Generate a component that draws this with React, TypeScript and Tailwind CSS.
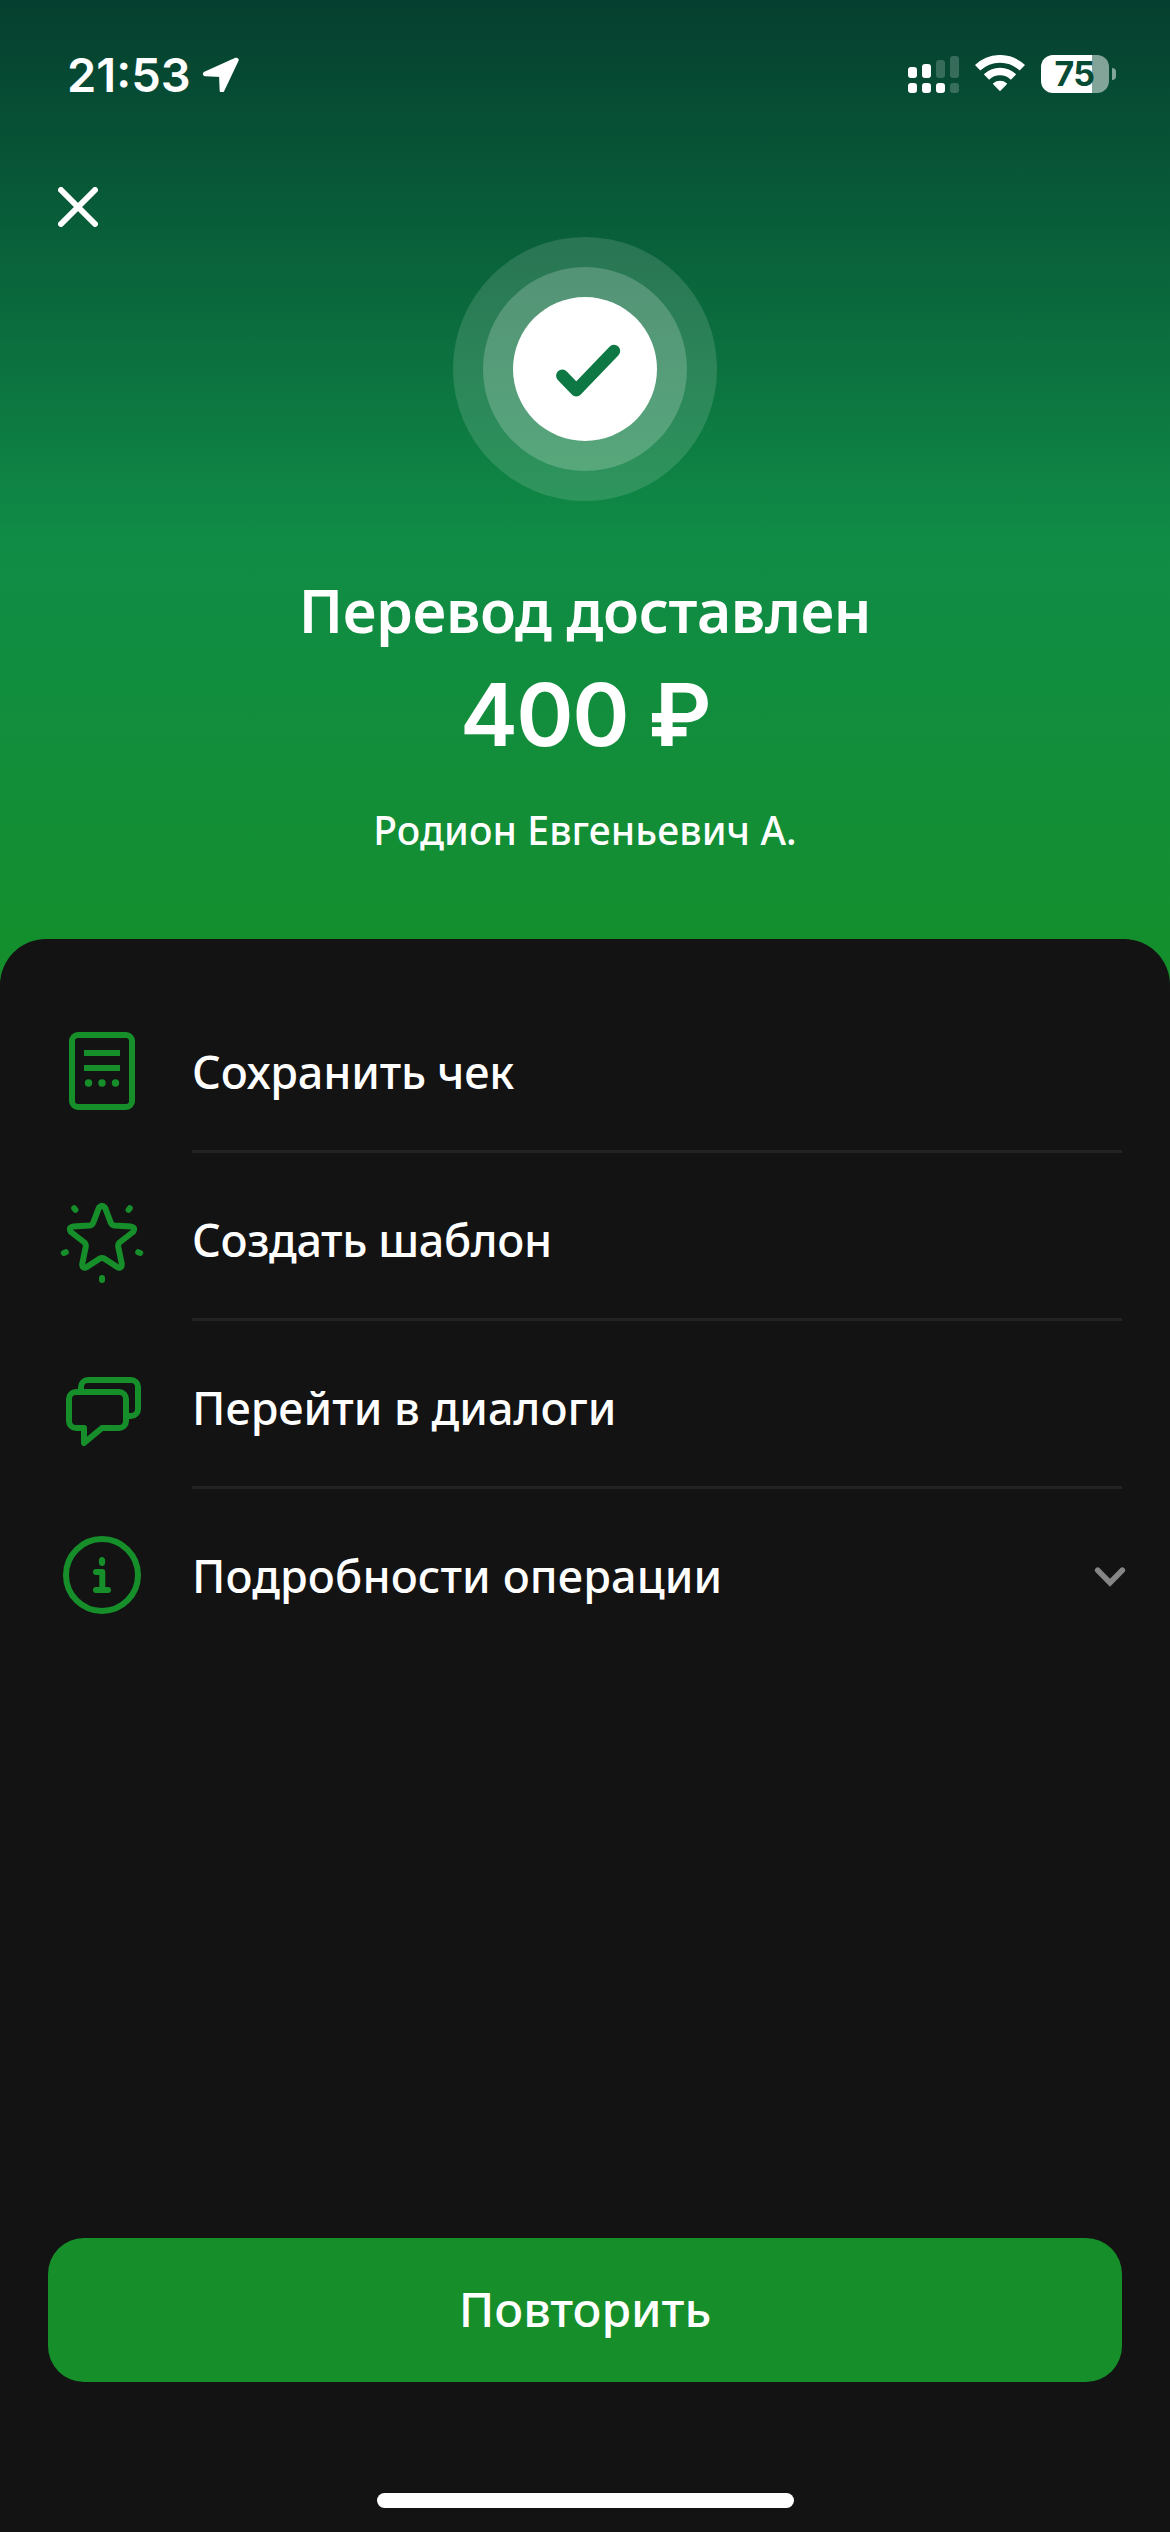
import type { ReactNode } from "react";

function StatusBar() {
  return <div className="flex h-[148px] items-center justify-between pl-[67px] pr-[54px]">
    <div className="flex items-center font-['Inter',sans-serif] text-[47px] leading-none font-semibold">
      <span className="w-[135px]">21:53</span>
      <svg className="h-[36px] w-[38px]" viewBox="486 78 114 108" fill="#fff" stroke="#fff" strokeWidth="14" strokeLinejoin="round">
        <path d="M589 90 496 132 544 134 546 181Z" />
      </svg>
    </div>
    <div className="flex items-center gap-4">
      <svg className="h-[38px] w-[51px]" viewBox="0 0 51 38" fill="#fff">
        <rect x="0" y="12" width="9" height="11" rx="3" />
        <rect x="14" y="9" width="9" height="14" rx="3" />
        <rect x="28" y="5" width="9" height="18" rx="3" opacity=".2" />
        <rect x="42" y="1" width="9" height="22" rx="3" opacity=".2" />
        <rect x="0" y="28" width="9" height="10" rx="3" />
        <rect x="14" y="28" width="9" height="10" rx="3" />
        <rect x="28" y="28" width="9" height="10" rx="3" />
        <rect x="42" y="28" width="9" height="10" rx="3" opacity=".2" />
      </svg>
      <svg className="h-[38px] w-[50px]" viewBox="282 75 150 114" fill="none" stroke="#fff">
        <path d="M290 113.5A96.5 96.5 0 0 1 424 113.5" strokeWidth="23" />
        <path d="M316.4 141A58.5 58.5 0 0 1 397.6 141" strokeWidth="23" />
        <path d="M357 181 338 161A30 30 0 0 1 376 161Z" fill="#fff" strokeWidth="4" strokeLinejoin="round" />
      </svg>
      <div className="flex items-center gap-[3px]">
        <div className="flex h-[38px] w-[68px] items-center justify-center rounded-[12px] bg-linear-to-r from-white from-75% to-white/50 to-75% font-['Inter',sans-serif] text-[34px] leading-none font-bold tracking-[-0.5px] text-[#064b35]">
          <span className="-ml-[1px]">75</span>
        </div>
        <div className="h-[12px] w-[4px] rounded-r-full bg-white/50" />
      </div>
    </div>
  </div>;
}

function Icon({ children }: { children: ReactNode }) {
  return <svg className="mt-[42px] size-[84px] shrink-0 overflow-visible" viewBox="0 0 84 84" fill="none" stroke="#168f2b" strokeWidth="6">{children}</svg>;
}

const actions = [
  {
    title: "Сохранить чек",
    tracking: "tracking-[-0.2px]",
    icon: <Icon>
      <rect x="12" y="6" width="60" height="72" rx="6" />
      <path d="M24 24h36M24 39h36" />
      <g fill="#168f2b" stroke="none"><circle cx="28.5" cy="54" r="3.7" /><circle cx="42" cy="54" r="3.7" /><circle cx="55.5" cy="54" r="3.7" /></g>
    </Icon>,
  },
  {
    title: "Создать шаблон",
    tracking: "tracking-[-0.4px]",
    icon: <Icon>
      <path d="M39 10.5Q42 7.5 45 10.5L50.5 25Q51.5 28.3 54.5 28.6L71 29.6Q76 30.5 73 35L59.5 45.5Q57.8 47.2 58.3 50L61.8 67Q61.8 72.5 56.8 69.8L44.5 61.7Q42 60.3 39.5 61.7L27.2 69.8Q22.2 72.5 22.2 67L25.7 50Q26.2 47.2 24.5 45.5L11 35Q8 30.5 13 29.6L29.5 28.6Q32.5 28.3 33.5 25Z" strokeLinejoin="round" />
      <path d="M14.2 11.2l1.2 1.6M69.8 11.2l-1.2 1.6M3.8 56l2-.8M80.2 56l-2-.8M42 81v2" strokeLinecap="round" />
    </Icon>,
  },
  {
    title: "Перейти в диалоги",
    tracking: "tracking-normal",
    icon: <Icon>
      <path d="M21 27V22a7 7 0 0 1 7-7H71a7 7 0 0 1 7 7V44a7 7 0 0 1-7 7H66" />
      <path d="M16 27H59a7 7 0 0 1 7 7V56a7 7 0 0 1-7 7H42L24 78V63H16a7 7 0 0 1-7-7V34a7 7 0 0 1 7-7Z" strokeLinejoin="round" />
    </Icon>,
  },
  {
    title: "Подробности операции",
    tracking: "tracking-[0.1px]",
    expandable: true,
    icon: <Icon>
      <circle cx="42" cy="42" r="36" />
      <path d="M36 39h6.3v18M36 57h12" strokeLinecap="round" strokeLinejoin="round" />
      <ellipse cx="42" cy="28.5" rx="3.2" ry="4.5" fill="#168f2b" stroke="none" />
    </Icon>,
  },
];

export default function App() {
  return <main className="flex h-[2532px] w-[1170px] flex-col bg-[#131313] font-['Noto_Sans',sans-serif] font-medium text-white">
    <header className="-mb-[46px] flex h-[985px] flex-col bg-linear-to-b from-[#053f2f] via-[#108c46] via-55% to-[#148f2a]">
      <StatusBar />
      <div className="flex h-[89px] items-center pt-[29px] pl-[58px]">
        <button aria-label="Закрыть">
          <svg className="size-[40px]" viewBox="0 0 40 40" stroke="#fff" strokeWidth="6" strokeLinecap="round"><path d="M3 3l34 34M37 3 3 37" /></svg>
        </button>
      </div>
      <div className="flex flex-col items-center">
        <div className="rounded-full bg-white/13 p-[30px]">
          <div className="rounded-full bg-white/20 p-[30px]">
            <div className="rounded-full bg-white">
              <svg className="size-[144px]" viewBox="0 0 144 144" fill="none" stroke="#0d7843" strokeWidth="12.4" strokeLinecap="round" strokeLinejoin="round"><path d="M49.3 78.7 63.3 93.3 101 54" /></svg>
            </div>
          </div>
        </div>
        <h1 className="mt-[73px] text-[59px] leading-[72px] font-semibold tracking-[-0.4px]">Перевод доставлен</h1>
        <p className="mt-[17px] font-['Inter',sans-serif] text-[87px] leading-[104px] font-semibold tracking-[-1.6px]">400 ₽</p>
        <p className="mt-[37px] text-[39px] leading-[52px] tracking-[0.1px]">Родион Евгеньевич А.</p>
      </div>
    </header>
    <section className="flex flex-1 flex-col rounded-t-[46px] bg-[#131313] pt-[48px]">
      <ul className="pr-[48px] pl-[60px]">
        {actions.map((a) => <li key={a.title} className="flex h-[168px] items-start gap-[48px]">
          {a.icon}
          <div className={`flex h-[166px] flex-1 items-start justify-between pt-[55px] text-[45px] leading-[60px] ${a.expandable ? "" : "border-b-[3px] border-[#232323]"}`}>
            <span className={a.tracking}>{a.title}</span>
            {a.expandable && <svg className="mt-[11px] -mr-[4px] size-[32px]" viewBox="0 0 32 32" fill="none" stroke="#868686" strokeWidth="5.6" strokeLinecap="round"><path d="M3.7 13.3 16 25.7 28.3 13.3" /></svg>}
          </div>
        </li>)}
      </ul>
      <button className="mx-[48px] mt-auto h-[144px] shrink-0 rounded-[36px] bg-[#168f2b] pb-[3px] text-[48px] leading-[60px]">Повторить</button>
      <div className="mx-auto mt-[111px] mb-[24px] h-[15px] w-[417px] shrink-0 rounded-full bg-white" />
    </section>
  </main>;
}
